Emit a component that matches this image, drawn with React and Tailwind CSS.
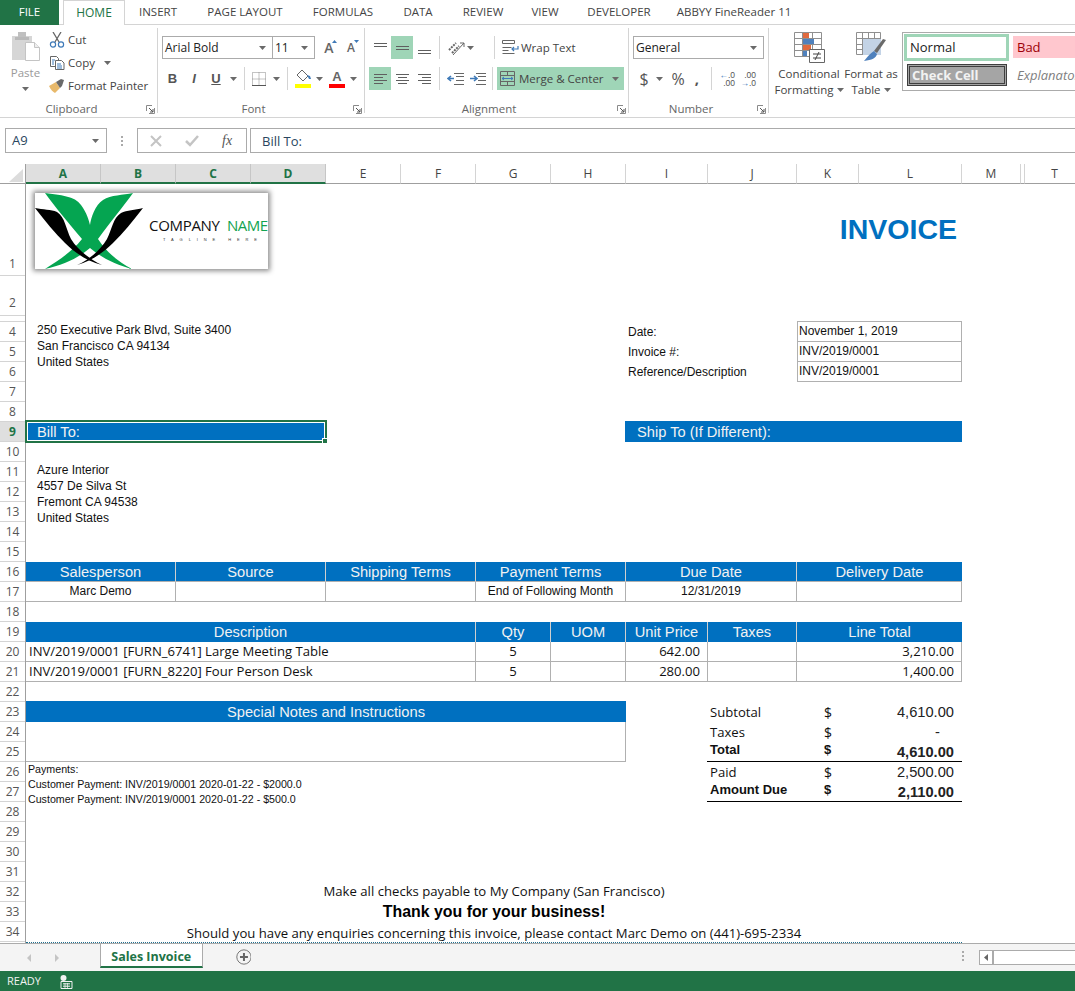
import React from 'react';

const ARIAL = "font-['Liberation_Sans',Arial,sans-serif]";
const OPEN = "font-['Open_Sans',sans-serif]";

function Caret({ className = '' }) {
  return (
    <svg width="7" height="4" viewBox="0 0 7 4" className={className}>
      <path d="M0 0h7L3.5 4z" fill="#6a6a6a" />
    </svg>
  );
}

function Launcher() {
  return (
    <svg width="9" height="9" viewBox="0 0 9 9" className="absolute right-[3px] top-[4px]">
      <path d="M0.5 6V0.5H6M8.5 3v5.5H3" fill="none" stroke="#8a8a8a" />
      <path d="M3 3l4 4M4 7h3V4" fill="none" stroke="#555" />
    </svg>
  );
}

function Group({ width, label, labelPad, children }) {
  return (
    <div className={`${width} relative flex h-[92px] shrink-0 flex-col`}>
      <div className="flex-1">{children}</div>
      <div className={`${labelPad} relative h-[16px] text-center text-[11.5px] leading-[16px] text-[#666]`}>
        {label}
        <Launcher />
      </div>
      <div className="absolute bottom-[4px] right-0 top-[3px] w-px bg-[#d4d4d4]" />
    </div>
  );
}

function Sep({ className = '' }) {
  return <div className={`h-[23px] w-px bg-[#d4d4d4] ${className}`} />;
}

function Slot({ width, className = '', children }) {
  return <div className={`${width} flex h-[23px] items-center justify-center ${className}`}>{children}</div>;
}

function Lines({ rows }) {
  return (
    <svg width="15" height="16" viewBox="0 0 15 16">
      {rows.map(([y, x1, x2]) => (
        <path key={y} d={`M${x1} ${y}.5H${x2}`} stroke="#5f5f5f" />
      ))}
    </svg>
  );
}

function ClipboardGroup() {
  return (
    <div className="flex pt-[3px]">
      <div className="ml-[9px] flex w-[33px] flex-col items-center">
        <svg width="30" height="31" viewBox="0 0 30 31" className="mt-[3px]">
          <rect x="1" y="5" width="20" height="24" fill="#d6d6d6" />
          <rect x="7" y="1" width="8" height="6" fill="#c0c0c0" />
          <rect x="4" y="6" width="14" height="3" fill="#b9b9b9" />
          <path d="M14.5 11.5h9l5 5v13h-14z" fill="#fff" stroke="#c4c4c4" />
          <path d="M23.5 11.5v5h5" fill="#eee" stroke="#c4c4c4" />
        </svg>
        <span className="mt-[3px] text-[11.5px] leading-[16px] text-[#9a9a9a]">Paste</span>
        <Caret className="mt-[6px]" />
      </div>
      <div className="ml-[7px] flex flex-col text-[11.5px] leading-[23px] text-[#444]">
        <div className="flex h-[23px] items-center">
          <svg width="16" height="16" viewBox="0 0 16 16">
            <path d="M4 0l6 10M12 0L6 10" stroke="#666" strokeWidth="1.3" fill="none" />
            <circle cx="4" cy="12.5" r="2.6" stroke="#3f7ab8" strokeWidth="1.2" fill="none" />
            <circle cx="12" cy="12.5" r="2.6" stroke="#3f7ab8" strokeWidth="1.2" fill="none" />
          </svg>
          <span className="ml-[3px]">Cut</span>
        </div>
        <div className="flex h-[23px] items-center">
          <svg width="16" height="14" viewBox="0 0 16 14">
            <path d="M1.5.5h6l2 2v8h-8z" fill="#fff" stroke="#666" />
            <path d="M6.5 4.5h6l2.5 2.5v6.5H6.5z" fill="#fff" stroke="#666" />
            <path d="M3 4h3M3 6h2M3 8h2M8 8h4M8 10h5M8 12h5" stroke="#3f7ab8" />
          </svg>
          <span className="ml-[3px]">Copy</span>
          <Caret className="ml-[9px]" />
        </div>
        <div className="flex h-[23px] items-center">
          <svg width="16" height="15" viewBox="0 0 16 15">
            <path d="M0 8l7-4 4 6-5 5c-2-1-4-3-6-7z" fill="#e8b96b" />
            <path d="M7 4l5-3 3 1-2 6-2 2z" fill="#6a6a6a" />
          </svg>
          <span className="ml-[3px] whitespace-nowrap">Format Painter</span>
        </div>
      </div>
    </div>
  );
}

function FontGroup() {
  return (
    <div className="pt-[11px]">
      <div className="flex h-[23px] items-center">
        <div className="ml-[4px] flex h-[23px] w-[111px] items-center justify-between border border-[#ababab] pl-[2px] pr-[6px] text-[12px] text-[#222]">
          Arial Bold
          <Caret />
        </div>
        <div className="-ml-px flex h-[23px] w-[43px] items-center justify-between border border-[#ababab] pl-[2px] pr-[6px] text-[12px] text-[#222]">
          11
          <Caret />
        </div>
        <div className="relative ml-[6px] w-[16px] text-center text-[14px] font-semibold leading-[23px] text-[#666]">
          A
          <svg width="5" height="3" viewBox="0 0 5 3" className="absolute right-0 top-[4px]"><path d="M0 3h5L2.500 0z" fill="#3f7ab8" /></svg>
        </div>
        <div className="relative ml-[6px] w-[16px] text-center text-[12px] font-semibold leading-[25px] text-[#666]">
          A
          <svg width="5" height="3" viewBox="0 0 5 3" className="absolute right-0 top-[5px]"><path d="M0 0h5L2.500 3z" fill="#3f7ab8" /></svg>
        </div>
      </div>
      <div className="mt-[8px] flex h-[23px] items-center text-[#555]">
        <Slot width="ml-[4px] w-[21px]" className={`${ARIAL} text-[13px] font-bold`}>B</Slot>
        <Slot width="w-[22px]" className={`${ARIAL} text-[13px] font-bold italic`}>I</Slot>
        <Slot width="w-[22px]" className={`${ARIAL} text-[13px] font-bold underline`}>U</Slot>
        <Slot width="w-[12px]"><Caret /></Slot>
        <Sep className="ml-[5px]" />
        <Slot width="ml-[5px] w-[18px]">
          <svg width="14" height="14" viewBox="0 0 14 14">
            <path d="M.5.5h13v13H.5zM7 .5v13M.5 7h13" fill="none" stroke="#888" strokeDasharray="1 1" />
            <path d="M0 13.500h14" stroke="#555" />
          </svg>
        </Slot>
        <Slot width="ml-[2px] w-[12px]"><Caret /></Slot>
        <Sep className="ml-[5px]" />
        <Slot width="ml-[6px] w-[18px]">
          <svg width="17" height="20" viewBox="0 0 17 20">
            <path d="M7 1l6 6-5 5-6-6z" fill="#fff" stroke="#666" />
            <path d="M12 6l3 1 1 3-2 0z" fill="#3f7ab8" />
            <rect x="0" y="15" width="16" height="4" fill="#ffff00" />
          </svg>
        </Slot>
        <Slot width="ml-[1px] w-[12px]"><Caret /></Slot>
        <Slot width="ml-[3px] w-[18px]">
          <div className="flex flex-col items-center">
            <span className={`${ARIAL} text-[13px] font-bold leading-[14px] text-[#666]`}>A</span>
            <div className="h-[4px] w-[16px] bg-[#ff0000]" />
          </div>
        </Slot>
        <Slot width="ml-[1px] w-[12px]"><Caret /></Slot>
      </div>
    </div>
  );
}

function AlignmentGroup() {
  return (
    <div className="pt-[11px] text-[11.5px] text-[#444]">
      <div className="flex h-[23px] items-center">
        <Slot width="ml-[4px] w-[22px]"><Lines rows={[[3, 1, 14], [6, 1, 14]]} /></Slot>
        <Slot width="w-[22px]" className="bg-[#9fd5b7]"><Lines rows={[[6, 1, 14], [9, 1, 14]]} /></Slot>
        <Slot width="w-[22px]"><Lines rows={[[10, 1, 14], [13, 1, 14]]} /></Slot>
        <Sep className="ml-[4px]" />
        <Slot width="ml-[7px] w-[18px]">
          <svg width="17" height="16" viewBox="0 0 17 16">
            <path d="M1 10l7-7M4 13l7-7" stroke="#666" strokeWidth="2" strokeDasharray="2 1" />
            <path d="M5 15L16 3M12 3h4v4" stroke="#666" fill="none" />
          </svg>
        </Slot>
        <Caret className="ml-[2px]" />
        <Sep className="ml-[20px]" />
        <Slot width="ml-[7px] w-[17px]">
          <svg width="17" height="16" viewBox="0 0 17 16">
            <path d="M.5.5h12v3H.5zM.5 7.500h9M.5 10.500h6M.5 13.500h12" fill="none" stroke="#666" />
            <path d="M16 6v3h-6M12 7l-2 2 2 2" fill="none" stroke="#3f7ab8" strokeWidth="1.2" />
          </svg>
        </Slot>
        <span className="ml-[2px] whitespace-nowrap">Wrap Text</span>
      </div>
      <div className="mt-[8px] flex h-[23px] items-center">
        <Slot width="ml-[4px] w-[22px]" className="bg-[#9fd5b7]"><Lines rows={[[3, 1, 14], [6, 1, 10], [9, 1, 14], [12, 1, 10]]} /></Slot>
        <Slot width="w-[22px]"><Lines rows={[[3, 1, 14], [6, 3, 12], [9, 1, 14], [12, 3, 12]]} /></Slot>
        <Slot width="w-[22px]"><Lines rows={[[3, 1, 14], [6, 5, 14], [9, 1, 14], [12, 5, 14]]} /></Slot>
        <Sep className="ml-[4px]" />
        <Slot width="ml-[7px] w-[17px]">
          <svg width="17" height="12" viewBox="0 0 17 12">
            <path d="M7 .5h10M9 3.500h8M9 7.500h8M7 11.500h10" stroke="#666" />
            <path d="M7 5.500H1M4 3L1 5.500 4 8" fill="none" stroke="#3f7ab8" strokeWidth="1.6" />
          </svg>
        </Slot>
        <Slot width="ml-[5px] w-[17px]">
          <svg width="17" height="12" viewBox="0 0 17 12">
            <path d="M7 .5h10M9 3.500h8M9 7.500h8M7 11.500h10" stroke="#666" />
            <path d="M1 5.500h6M5 3l3 2.500L5 8" fill="none" stroke="#3f7ab8" strokeWidth="1.6" />
          </svg>
        </Slot>
        <Sep className="ml-[6px]" />
        <div className="ml-[4px] flex h-[23px] w-[127px] items-center bg-[#9fd5b7] pl-[3px]">
          <svg width="15" height="15" viewBox="0 0 15 15">
            <path d="M.5.5h14v14H.5zM.5 4.500h14M.5 10.500h14M7.500.5v4M7.500 10.500v4" fill="none" stroke="#666" />
            <path d="M2 7.500h11M4 6L2 7.500 4 9M11 6l2 1.500L11 9" fill="none" stroke="#3f7ab8" />
          </svg>
          <span className="ml-[4px] whitespace-nowrap">Merge &amp; Center</span>
          <Caret className="ml-[8px]" />
        </div>
      </div>
    </div>
  );
}

function NumberGroup() {
  return (
    <div className="pt-[11px] text-[#555]">
      <div className="ml-[4px] flex h-[23px] w-[131px] items-center justify-between border border-[#ababab] pl-[2px] pr-[6px] text-[12px] text-[#222]">
        General
        <Caret />
      </div>
      <div className="mt-[8px] flex h-[23px] items-center">
        <Slot width="ml-[7px] w-[16px]" className="text-[16px]">$</Slot>
        <Slot width="ml-[1px] w-[12px]"><Caret /></Slot>
        <Slot width="ml-[4px] w-[18px]" className="text-[16px]">%</Slot>
        <Slot width="ml-[2px] w-[16px]" className="text-[15px] font-bold">,</Slot>
        <Sep className="ml-[6px]" />
        <div className={`${ARIAL} ml-[5px] flex w-[18px] flex-col text-[8.5px] leading-[8px]`}>
          <span className="text-right"><span className="text-[#3f7ab8]">←</span>.0</span>
          <span className="text-right">.00</span>
        </div>
        <div className={`${ARIAL} ml-[3px] flex w-[18px] flex-col text-[8.5px] leading-[8px]`}>
          <span className="text-right">.00</span>
          <span className="text-right"><span className="text-[#3f7ab8]">→</span>.0</span>
        </div>
      </div>
    </div>
  );
}

function StylesGroup() {
  return (
    <div className="flex pt-[7px] text-[11.5px] leading-[16px] text-[#444]">
      <div className="ml-[2px] flex w-[76px] shrink-0 flex-col items-center text-center">
        <svg width="31" height="31" viewBox="0 0 31 31">
          <path d="M.5.5h27v24H.5zM.5 6.500h27M.5 12.500h27M.5 18.500h27M8.500.5v24M18.500.5v24" fill="#fff" stroke="#8f8f8f" />
          <rect x="9" y="1" width="6" height="5" fill="#e06a3f" />
          <rect x="9" y="7" width="11" height="5" fill="#4f81bd" />
          <rect x="9" y="13" width="8" height="5" fill="#e06a3f" />
          <rect x="9" y="19" width="4" height="5" fill="#4f81bd" />
          <path d="M15.500 17.500h15v13h-15z" fill="#fff" stroke="#666" />
          <path d="M19 22h8M19 26h8M25 20l-4 8" stroke="#444" fill="none" />
        </svg>
        <span className="mt-[3px] whitespace-nowrap">Conditional</span>
        <span className="flex items-center whitespace-nowrap">Formatting<Caret className="ml-[3px]" /></span>
      </div>
      <div className="ml-[-11px] flex w-[70px] shrink-0 flex-col items-center text-center">
        <svg width="31" height="31" viewBox="0 0 31 31">
          <path d="M.5.5h24v22H.5zM.5 6.500h24M.5 12.500h24M.5 17.500h24M6.500.5v22M12.500.5v22M18.500.5v22" fill="#fff" stroke="#8f8f8f" />
          <rect x="7" y="7" width="18" height="16" fill="#c3d3e6" />
          <path d="M30 8l-9 13-3-2 9-12z" fill="#6a6a6a" />
          <path d="M18 19l3 3c-1 4-5 6-13 7 3-3 5-7 10-10z" fill="#4f81bd" />
        </svg>
        <span className="mt-[3px] whitespace-nowrap">Format as</span>
        <span className="flex items-center whitespace-nowrap">Table<Caret className="ml-[3px]" /></span>
      </div>
      <div className="ml-[-4px] grid h-[59px] w-[180px] shrink-0 grid-cols-[108px_100px] grid-rows-[30px_28px] overflow-hidden border border-[#ababab] pl-px pt-px text-[13px]">
        <div className="flex h-[27px] w-[105px] items-center border-[3px] border-[#9fd5b7] bg-white pb-[2px] pl-[3px] text-[#222]">Normal</div>
        <div className="ml-[1px] mt-[2px] flex h-[22px] items-center bg-[#ffc7ce] pb-[1px] pl-[4px] text-[#9c0006]">Bad</div>
        <div className="ml-[3px] flex h-[22px] w-[100px] items-center border-[3px] border-double border-[#3f3f3f] bg-[#a5a5a5] pl-[2px] font-bold text-[#f2f2f2]">Check Cell</div>
        <div className="ml-[1px] flex h-[22px] items-center pl-[4px] italic text-[#7f7f7f]">Explanatory</div>
      </div>
    </div>
  );
}

function Logo() {
  return (
    <div className="ml-[9px] mt-[9px] h-[76px] w-[233px] bg-white shadow-[0_0_5px_2px_rgba(0,0,0,0.45)]">
      <svg width="233" height="76" viewBox="0 0 233 76">
        <path d="M10 0C25 2 40 3 46 12C52 20 54 28 55 32C56 25 60 12 68 7C76 2 88 2 98 0C88 14 76 28 63 46C72 60 85 70 97 76C82 72 68 66 55 55C42 66 28 72 10 76C22 68 36 60 47 46C32 28 20 14 10 0Z" fill="#05a551" />
        <path d="M0 15C8 17 16 16 22 19C30 24 31 36 36 46C42 56 54 66 67 72C52 68 40 60 30 50C20 40 10 28 0 15Z" fill="#000" />
        <path d="M108 15C100 17 92 17 86 20C78 25 77 36 72 46C66 56 56 66 42 72C56 68 68 60 78 50C88 40 98 28 108 15Z" fill="#000" />
        <text x="114" y="38" fontSize="15" fill="#111" className={OPEN} textLength="71">COMPANY</text>
        <text x="192" y="38" fontSize="15" fill="#12a350" className={OPEN} textLength="41">NAME</text>
        <text x="128" y="47.500" fontSize="4" fill="#333" className={ARIAL} textLength="94">TAGLINE   HERE</text>
      </svg>
    </div>
  );
}

const COLUMNS = [
  ['A', 'w-[75px]'], ['B', 'w-[75px]'], ['C', 'w-[75px]'], ['D', 'w-[75px]'],
  ['E', 'w-[75px]'], ['F', 'w-[75px]'], ['G', 'w-[75px]'], ['H', 'w-[75px]'],
  ['I', 'w-[82px]'], ['J', 'w-[89px]'], ['K', 'w-[62px]'], ['L', 'w-[103px]'],
  ['M', 'w-[59px]'], ['', 'w-[4px]'], ['T', 'w-[60px]'],
];

function ColumnHeader() {
  return (
    <div className={`${OPEN} flex h-[20px] text-[12px] leading-[20px]`}>
      <div className="relative h-[20px] w-[26px] shrink-0 border-b border-r border-[#9f9f9f]">
        <svg width="14" height="13" viewBox="0 0 14 13" className="absolute left-[9px] top-[5px]"><path d="M14 0v13H0z" fill="#dcdcdc" /></svg>
      </div>
      {COLUMNS.map(([name, w], i) =>
        i < 4 ? (
          <div key={name} className={`${w} shrink-0 border-b-2 border-r border-[#217346] border-r-[#c6c6c6] bg-[#dfdfdf] text-center font-bold text-[#217346]`}>{name}</div>
        ) : (
          <div key={i} className={`${w} shrink-0 border-b border-r border-[#9f9f9f] border-r-[#d4d4d4] text-center text-[#444]`}>{name}</div>
        )
      )}
    </div>
  );
}

const ROW_HEADS = [
  ['1', 'h-[92px] pb-[2px]'], ['2', 'h-[40px] pb-[3px]'], ['', 'h-[6px]'],
  ...['4', '5', '6', '7', '8', '9', '10', '11', '12', '13', '14', '15', '16', '17', '18', '19', '20', '21', '22', '23', '24', '25', '26', '27', '28', '29', '30', '31', '32', '33', '34'].map((n) => [n, 'h-[20px]']),
];

function RowHeads() {
  return (
    <div className={`${OPEN} flex w-[26px] shrink-0 flex-col border-r border-[#9f9f9f] text-[12px] leading-[19px]`}>
      {ROW_HEADS.map(([n, h], i) => (
        <div
          key={i}
          className={`${h} flex w-[25px] items-end justify-center overflow-hidden border-b ${n === '9' ? 'border-[#d4d4d4] bg-[#dfdfdf] font-bold text-[#217346]' : 'border-[#d4d4d4] text-[#555]'}`}
        >
          {n}
        </div>
      ))}
    </div>
  );
}

const HEAD = `${ARIAL} flex items-center justify-center bg-[#0070c0] text-[14.67px] text-[#f2f2f2]`;
const BOX = 'flex items-center border-b border-r border-[#b0b0b0]';
const SMALL = `${ARIAL} text-[12px] text-[#111]`;
const DESC = `${OPEN} text-[13.100px] text-[#111]`;
const NUM = `${ARIAL} text-[14.67px] text-[#222]`;
const DOLLAR = `${OPEN} text-[14px] text-[#111]`;

function Sheet() {
  return (
    <div className="grid grid-cols-[75px_75px_75px_75px_75px_75px_75px_75px_82px_89px_62px_103px] grid-rows-[92px_40px_6px_repeat(31,20px)_1px] bg-white">
      <div className="col-[1/5] row-[1]"><Logo /></div>
      <div className={`${ARIAL} col-[9/13] row-[1] flex items-center justify-end pb-[2px] pr-[5px] text-[28.500px] font-bold text-[#0070c0]`}>INVOICE</div>

      <div className={`${SMALL} col-[1/5] row-[4/7] pl-[11px] leading-[16px]`}>
        <div>250 Executive Park Blvd, Suite 3400</div>
        <div>San Francisco CA 94134</div>
        <div>United States</div>
      </div>

      <div className={`${SMALL} col-[9/11] row-[4] flex items-center pl-[2px]`}>Date:</div>
      <div className={`${SMALL} col-[9/11] row-[5] flex items-center pl-[2px]`}>Invoice #:</div>
      <div className={`${SMALL} col-[9/11] row-[6] flex items-center pl-[2px]`}>Reference/Description</div>
      <div className={`${SMALL} ${BOX} col-[11/13] row-[4] -mt-px border-l border-t pb-[1px] pl-[1px]`}>November 1, 2019</div>
      <div className={`${SMALL} ${BOX} col-[11/13] row-[5] border-l pb-[2px] pl-[1px]`}>INV/2019/0001</div>
      <div className={`${SMALL} ${BOX} col-[11/13] row-[6] border-l pb-[2px] pl-[1px]`}>INV/2019/0001</div>

      <div className={`${HEAD} relative col-[1/5] row-[9] justify-start pl-[11px]`}>
        Bill To:
        <div className="absolute -bottom-px -left-px -right-px -top-[2px] border-2 border-[#217346]">
          <div className="h-full w-full border border-white" />
        </div>
        <div className="absolute -bottom-[2px] -right-[2px] h-[6px] w-[6px] border border-white bg-[#217346]" />
      </div>
      <div className={`${HEAD} col-[9/13] row-[9] -ml-px -mt-px justify-start pl-[12px]`}>Ship To (If Different):</div>

      <div className={`${SMALL} col-[1/5] row-[11/15] pl-[11px] leading-[16px]`}>
        <div>Azure Interior</div>
        <div>4557 De Silva St</div>
        <div>Fremont CA 94538</div>
        <div>United States</div>
      </div>

      <div className={`${HEAD} col-[1/3] row-[16] border-b border-r border-b-[#b0b0b0] border-r-[#cfcfcf]`}>Salesperson</div>
      <div className={`${HEAD} col-[3/5] row-[16] border-b border-r border-b-[#b0b0b0] border-r-[#cfcfcf]`}>Source</div>
      <div className={`${HEAD} col-[5/7] row-[16] border-b border-r border-b-[#b0b0b0] border-r-[#cfcfcf]`}>Shipping Terms</div>
      <div className={`${HEAD} col-[7/9] row-[16] border-b border-r border-b-[#b0b0b0] border-r-[#cfcfcf]`}>Payment Terms</div>
      <div className={`${HEAD} col-[9/11] row-[16] border-b border-r border-b-[#b0b0b0] border-r-[#cfcfcf]`}>Due Date</div>
      <div className={`${HEAD} col-[11/13] row-[16] border-b border-b-[#b0b0b0]`}>Delivery Date</div>
      <div className={`${SMALL} ${BOX} col-[1/3] row-[17] justify-center pb-[2px]`}>Marc Demo</div>
      <div className={`${BOX} col-[3/5] row-[17]`} />
      <div className={`${BOX} col-[5/7] row-[17]`} />
      <div className={`${SMALL} ${BOX} col-[7/9] row-[17] justify-center pb-[2px]`}>End of Following Month</div>
      <div className={`${SMALL} ${BOX} col-[9/11] row-[17] justify-center pb-[2px]`}>12/31/2019</div>
      <div className={`${BOX} col-[11/13] row-[17]`} />

      <div className={`${HEAD} col-[1/7] row-[19] border-r border-r-[#cfcfcf]`}>Description</div>
      <div className={`${HEAD} col-[7] row-[19] border-r border-r-[#cfcfcf]`}>Qty</div>
      <div className={`${HEAD} col-[8] row-[19] border-r border-r-[#cfcfcf]`}>UOM</div>
      <div className={`${HEAD} col-[9] row-[19] border-r border-r-[#cfcfcf]`}>Unit Price</div>
      <div className={`${HEAD} col-[10] row-[19] border-r border-r-[#cfcfcf]`}>Taxes</div>
      <div className={`${HEAD} col-[11/13] row-[19]`}>Line Total</div>

      <div className={`${DESC} ${BOX} col-[1/7] row-[20] pl-[3px] pt-[1px]`}>INV/2019/0001 [FURN_6741] Large Meeting Table</div>
      <div className={`${DESC} ${BOX} col-[7] row-[20] justify-center pt-[1px]`}>5</div>
      <div className={`${BOX} col-[8] row-[20]`} />
      <div className={`${DESC} ${BOX} col-[9] row-[20] justify-end pr-[7px] pt-[1px]`}>642.00</div>
      <div className={`${BOX} col-[10] row-[20]`} />
      <div className={`${DESC} ${BOX} col-[11/13] row-[20] justify-end pr-[7px]`}>3,210.00</div>

      <div className={`${DESC} ${BOX} col-[1/7] row-[21] pl-[3px] pt-[1px]`}>INV/2019/0001 [FURN_8220] Four Person Desk</div>
      <div className={`${DESC} ${BOX} col-[7] row-[21] justify-center pt-[1px]`}>5</div>
      <div className={`${BOX} col-[8] row-[21]`} />
      <div className={`${DESC} ${BOX} col-[9] row-[21] justify-end pr-[7px] pt-[1px]`}>280.00</div>
      <div className={`${BOX} col-[10] row-[21]`} />
      <div className={`${DESC} ${BOX} col-[11/13] row-[21] justify-end pr-[7px]`}>1,400.00</div>

      <div className={`${HEAD} col-[1/9] row-[23] -mt-px`}>Special Notes and Instructions</div>
      <div className="col-[1/9] row-[24/26] border-b border-r border-[#b0b0b0]" />

      <div className={`${ARIAL} col-[1/9] row-[26/29] pl-[2px] text-[10.67px] leading-[15px] text-[#111]`}>
        <div>Payments:</div>
        <div>Customer Payment: INV/2019/0001 2020-01-22 - $2000.0</div>
        <div>Customer Payment: INV/2019/0001 2020-01-22 - $500.0</div>
      </div>

      <div className={`${DESC} col-[10] row-[23] flex items-center pl-[2px] pt-[1px]`}>Subtotal</div>
      <div className={`${DOLLAR} col-[11] row-[23] flex items-center pl-[27px] pt-[1px]`}>$</div>
      <div className={`${NUM} col-[12] row-[23] flex items-center justify-end pr-[8px]`}>4,610.00</div>
      <div className={`${DESC} col-[10] row-[24] flex items-center pl-[2px] pt-[1px]`}>Taxes</div>
      <div className={`${DOLLAR} col-[11] row-[24] flex items-center pl-[27px] pt-[1px]`}>$</div>
      <div className={`${NUM} col-[12] row-[24] flex items-center justify-end pr-[22px]`}>-</div>
      <div className={`${ARIAL} col-[10] row-[25] -ml-px flex items-center border-b border-black pb-[3px] pl-[3px] text-[13px] font-bold text-[#111]`}>Total</div>
      <div className={`${ARIAL} col-[11] row-[25] flex items-center border-b border-black pb-[3px] pl-[27px] text-[13px] font-bold text-[#111]`}>$</div>
      <div className={`${NUM} col-[12] row-[25] flex items-center justify-end border-b border-black pr-[8px] font-bold text-[#111]`}>4,610.00</div>
      <div className={`${DESC} col-[10] row-[26] flex items-center pl-[2px] pt-[1px]`}>Paid</div>
      <div className={`${DOLLAR} col-[11] row-[26] flex items-center pl-[27px] pt-[1px]`}>$</div>
      <div className={`${NUM} col-[12] row-[26] flex items-center justify-end pr-[8px]`}>2,500.00</div>
      <div className={`${ARIAL} col-[10] row-[27] -ml-px flex items-center border-b border-black pb-[3px] pl-[3px] text-[13px] font-bold text-[#111]`}>Amount Due</div>
      <div className={`${ARIAL} col-[11] row-[27] flex items-center border-b border-black pb-[3px] pl-[27px] text-[13px] font-bold text-[#111]`}>$</div>
      <div className={`${NUM} col-[12] row-[27] flex items-center justify-end border-b border-black pr-[8px] font-bold text-[#111]`}>2,110.00</div>

      <div className={`${OPEN} col-[1/13] row-[32] flex items-center justify-center pb-[1px] text-[13.150px] text-[#111]`}>Make all checks payable to My Company (San Francisco)</div>
      <div className={`${ARIAL} col-[1/13] row-[33] flex items-center justify-center pb-[1px] text-[15.900px] font-bold text-black`}>Thank you for your business!</div>
      <div className={`${OPEN} col-[1/13] row-[34] flex items-center justify-center pt-[3px] text-[13.150px] text-[#111]`}>Should you have any enquiries concerning this invoice, please contact Marc Demo on (441)-695-2334</div>
      <div className="col-[1/13] row-[35] border-t border-dotted border-[#1f6f8f]" />
    </div>
  );
}

export default function App() {
  return (
    <div className={`${OPEN} flex h-[991px] w-[1075px] flex-col overflow-hidden bg-white`}>
      {/* tab strip */}
      <div className="flex h-[25px] shrink-0 border-b border-[#d4d4d4] text-[11.5px] leading-[24px] text-[#444]">
        <div className="h-[25px] w-[59px] bg-[#217346] text-center text-white">FILE</div>
        <div className="ml-[4px] h-[25px] w-[62px] border border-b-0 border-[#d4d4d4] bg-white text-center text-[12px] text-[#217346]">HOME</div>
        <div className="w-[66px] text-center">INSERT</div>
        <div className="w-[108px] whitespace-nowrap text-center">PAGE LAYOUT</div>
        <div className="w-[88px] text-center">FORMULAS</div>
        <div className="w-[62px] text-center">DATA</div>
        <div className="w-[68px] text-center">REVIEW</div>
        <div className="w-[56px] text-center">VIEW</div>
        <div className="w-[92px] text-center">DEVELOPER</div>
        <div className="w-[138px] whitespace-nowrap text-center">ABBYY FineReader 11</div>
      </div>

      {/* ribbon */}
      <div className="flex h-[93px] shrink-0 border-b border-[#d4d4d4]">
        <Group width="w-[158px]" label="Clipboard" labelPad="pr-[15px]"><ClipboardGroup /></Group>
        <Group width="w-[207px]" label="Font" labelPad="pr-[16px]"><FontGroup /></Group>
        <Group width="w-[264px]" label="Alignment" labelPad="pr-[16px]"><AlignmentGroup /></Group>
        <Group width="w-[140px]" label="Number" labelPad="pr-[16px]"><NumberGroup /></Group>
        <div className="w-[306px] shrink-0 overflow-hidden"><StylesGroup /></div>
      </div>

      {/* formula bar */}
      <div className="flex h-[46px] shrink-0 items-start pl-[5px] pt-[10px] text-[13px] leading-[25px] text-[#2a4660]">
        <div className="flex h-[25px] w-[102px] items-center justify-between border border-[#ababab] pl-[6px] pr-[7px]">
          A9
          <Caret />
        </div>
        <div className="ml-[13px] flex h-[25px] w-[3px] flex-col items-center justify-center gap-[2px]">
          <div className="h-[2px] w-[2px] bg-[#aaa]" />
          <div className="h-[2px] w-[2px] bg-[#aaa]" />
          <div className="h-[2px] w-[2px] bg-[#aaa]" />
        </div>
        <div className="ml-[14px] flex h-[25px] w-[110px] items-center border border-[#ababab]">
          <svg width="12" height="12" viewBox="0 0 12 12" className="ml-[12px]"><path d="M1 1l10 10M11 1L1 11" stroke="#c4c4c4" strokeWidth="2" /></svg>
          <svg width="14" height="12" viewBox="0 0 14 12" className="ml-[23px]"><path d="M1 6l4 4 8-9" stroke="#c4c4c4" strokeWidth="2.500" fill="none" /></svg>
          <span className="ml-[23px] font-['Liberation_Serif',serif] text-[14px] italic text-[#555]">fx</span>
        </div>
        <div className="ml-[3px] flex h-[25px] flex-1 items-center border border-r-0 border-[#ababab] pl-[11px] pt-[1px]">Bill To:</div>
      </div>

      <ColumnHeader />

      <div className="flex shrink-0">
        <RowHeads />
        <Sheet />
      </div>

      {/* sheet tabs */}
      <div className="flex h-[28px] shrink-0 items-start border-t border-[#ababab] bg-[#f4f4f4]">
        <svg width="4" height="8" viewBox="0 0 4 8" className="ml-[27px] mt-[10px]"><path d="M4 0v8L0 4z" fill="#c4c4c4" /></svg>
        <svg width="4" height="8" viewBox="0 0 4 8" className="ml-[24px] mt-[10px]"><path d="M0 0v8l4-4z" fill="#c4c4c4" /></svg>
        <div className="ml-[41px] h-[24px] w-[103px] border-x border-b-2 border-[#ababab] border-b-[#217346] bg-white text-center text-[12.500px] font-bold leading-[25px] text-[#217346]">Sales Invoice</div>
        <svg width="16" height="16" viewBox="0 0 16 16" className="ml-[33px] mt-[5px]">
          <circle cx="8" cy="8" r="7.200" fill="none" stroke="#777" />
          <path d="M8 4v8M4 8h8" stroke="#666" strokeWidth="2" />
        </svg>
        <div className="ml-[711px] mt-[7px] flex flex-col gap-[2px]">
          <div className="h-[2px] w-[2px] bg-[#aaa]" />
          <div className="h-[2px] w-[2px] bg-[#aaa]" />
          <div className="h-[2px] w-[2px] bg-[#aaa]" />
        </div>
        <div className="ml-[15px] mt-[6px] flex h-[15px] w-[96px] items-center border border-r-0 border-[#ababab] bg-white">
          <svg width="4" height="7" viewBox="0 0 4 7" className="ml-[4px]"><path d="M4 0v7L0 3.500z" fill="#666" /></svg>
          <div className="ml-[4px] h-full w-[2px] bg-[#ababab]" />
        </div>
      </div>

      {/* status bar */}
      <div className="flex h-[20px] shrink-0 items-center bg-[#217346] pl-[7px] pt-[1px] text-[11px] text-[#f2f2f2]">
        READY
        <svg width="13" height="14" viewBox="0 0 13 14" className="ml-[19px]">
          <circle cx="3.500" cy="3" r="3" fill="#f2f2f2" />
          <path d="M1 6.500h11v7H1z" fill="none" stroke="#f2f2f2" />
          <path d="M3 8.500h7M3 10h7M3 11.500h7M5 8v5M7.500 8v5" stroke="#f2f2f2" strokeWidth=".7" />
        </svg>
      </div>
    </div>
  );
}
